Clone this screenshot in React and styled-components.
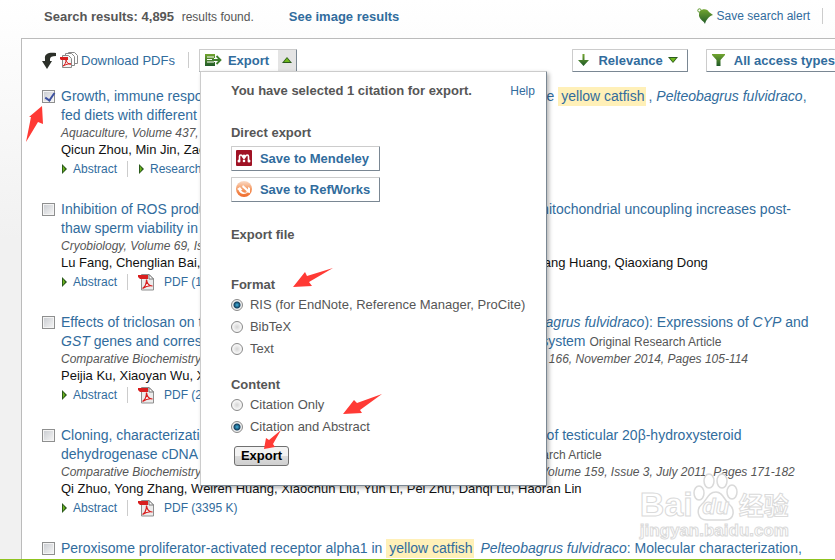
import React from "react";
import styled, { createGlobalStyle, css } from "styled-components";

const results = [
  {
    id: "growth",
    checked: true,
    title: [
      <>
        Growth, immune response and resistance to Aeromonas hydrophila, for
        juvenile <mark>yellow catfish</mark>, <i>Pelteobagrus fulvidraco</i>,
      </>,
      <>
        fed diets with different arginine levels{" "}
        <small>Original Research Article</small>
      </>,
    ],
    journal: "Aquaculture, Volume 437, 1 February 2015, Pages 84-91",
    authors: "Qicun Zhou, Min Jin, Zachary C. Elmada, Xupeng Liang, Kangsen Mai",
    highlights: true,
  },
  {
    id: "inhibition",
    title: [
      <>
        Inhibition of ROS production through mitochondria-targeted antioxidants
        and mitochondrial uncoupling increases post-
      </>,
      <>
        thaw sperm viability in <mark>yellow catfish</mark>{" "}
        <small>Original Research Article</small>
      </>,
    ],
    journal: "Cryobiology, Volume 69, Issue 3, December 2014, Pages 386-393",
    authors:
      "Lu Fang, Chenglian Bai, Yuanhong Chen, Jun Dai, Yang Xiang, Xiaoping Ji, Changjiang Huang, Qiaoxiang Dong",
    size: "1207 K",
  },
  {
    id: "triclosan",
    title: [
      <>
        Effects of triclosan on the detoxification system for the{" "}
        <mark>yellow catfish</mark> (<i>Pelteobagrus fulvidraco</i>):
        Expressions of <i>CYP</i> and
      </>,
      <>
        <i>GST</i> genes and corresponding enzyme activity in phases I, II and
        antioxidant system <small>Original Research Article</small>
      </>,
    ],
    journal:
      "Comparative Biochemistry and Physiology – Part C: Toxicology and Pharmacology, Volume 166, November 2014, Pages 105-114",
    authors:
      "Peijia Ku, Xiaoyan Wu, Xiangping Nie, Jinmiao Ou, Lan Wang, Tao Su, Yigang Li",
    size: "2148 K",
  },
  {
    id: "cloning",
    title: [
      <>
        Cloning, characterization and expression profile and tissue distribution
        pattern of testicular 20β-hydroxysteroid
      </>,
      <>
        dehydrogenase cDNA in <mark>yellow catfish</mark> (
        <i>Pelteobagrus fulvidraco</i>) <small>Original Research Article</small>
      </>,
    ],
    journal:
      "Comparative Biochemistry and Physiology – Part A: Molecular and Integrative Physiology, Volume 159, Issue 3, July 2011, Pages 171-182",
    authors:
      "Qi Zhuo, Yong Zhang, Weiren Huang, Xiaochun Liu, Yun Li, Pei Zhu, Danqi Lu, Haoran Lin",
    size: "3395 K",
  },
  {
    id: "peroxisome",
    title: [
      <>
        Peroxisome proliferator-activated receptor alpha1 in{" "}
        <mark>yellow catfish</mark> <i>Pelteobagrus fulvidraco</i>: Molecular
        characterization,
      </>,
    ],
  },
];

const Triangle = ({ dir }) => {
  const points = {
    right: "1,0 6,5 1,10",
    up: "0,8 5,2 10,8",
    down: "0,2 10,2 5,8",
  };
  const inner = {
    right: "2,2 4,5 2,8",
    up: "2,7 5,3 8,7",
    down: "2,3 8,3 5,7",
  };
  return (
    <svg width={dir === "right" ? 6 : 10} height="10" aria-hidden="true">
      <polygon points={points[dir]} fill="#2b5a1c" />
      <polygon points={inner[dir]} fill="#6fb81c" />
    </svg>
  );
};

const PdfIcon = () => (
  <svg width="17" height="17" viewBox="0 0 17 17" aria-hidden="true">
    <path d="M3.500.5h7.500l4.500 4.500v11h-12z" fill="#ececec" stroke="#8f8f8f" />
    <path d="M11 .5v4.500h4.500z" fill="#fff" stroke="#777" />
    <path d="M0 1h10v4H2L0 3z" fill="#d81e1e" />
    <path
      d="M4.500 14.500c2.500-1.500 4-5 4-9 .5 4 3 6.500 6 6.500-4-1-7 .5-10 2.500z"
      fill="#fff"
      stroke="#d81e1e"
      strokeWidth="1.200"
    />
  </svg>
);

const PdfStackIcon = () => (
  <svg width="18" height="17" viewBox="0 0 18 17" aria-hidden="true">
    <path d="M8.500.5h6l3 3v8h-9z" fill="#fff" stroke="#8a8a8a" />
    <path d="M5.500 1.500h6l3 3v9h-9z" fill="#fff" stroke="#8a8a8a" />
    <path d="M2.500 3.500h6l3 3v9h-9z" fill="#f4f4f4" stroke="#8a8a8a" />
    <path d="M0 5h8v3H1L0 7z" fill="#d81e1e" />
    <path
      d="M3 14c2-1 3-4 3-6 1 3 2 4 5 4-3-.5-5 .5-8 2z"
      fill="none"
      stroke="#d81e1e"
    />
  </svg>
);

const DownloadArrow = () => (
  <svg width="15" height="17" viewBox="0 0 15 17" aria-hidden="true">
    <path
      d="M14 1C8 0 2 1 3 7v2H0l5 8 5-8H8V7c0-2 2-3 6-3z"
      fill="#2c3029"
    />
  </svg>
);

const Gradient = ({ id }) => (
  <linearGradient id={id} x1="0" y1="0" x2="0" y2="1">
    <stop offset="0" stopColor="#72a52f" />
    <stop offset="1" stopColor="#1f5a28" />
  </linearGradient>
);

const ExportIcon = () => (
  <svg width="17" height="13" viewBox="0 0 17 13" aria-hidden="true">
    <defs>
      <Gradient id="exportFill" />
    </defs>
    <path d="M0 0h10v12H0z" fill="url(#exportFill)" />
    <path d="M2 3h7M2 5.500h7M2 8h7" stroke="#fff" />
    <path
      d="M9 6h6M11.500 1.500L16 6l-4.500 4.500"
      fill="none"
      stroke="#fff"
      strokeWidth="4"
    />
    <path
      d="M7 6h8M11.500 2L15.500 6l-4 4"
      fill="none"
      stroke="#3f7f2c"
      strokeWidth="1.800"
    />
  </svg>
);

const SortIcon = () => (
  <svg width="11" height="12" viewBox="0 0 11 12" aria-hidden="true">
    <defs>
      <Gradient id="sortFill" />
    </defs>
    <path d="M4.500 0h2v6H11l-5.500 6L0 6h4.500z" fill="url(#sortFill)" />
  </svg>
);

const FunnelIcon = () => (
  <svg width="13" height="12" viewBox="0 0 13 12" aria-hidden="true">
    <defs>
      <Gradient id="funnelFill" />
    </defs>
    <path d="M0 0h13v1L8.500 6v6h-4V6L0 1z" fill="url(#funnelFill)" />
  </svg>
);

const BellIcon = () => (
  <svg width="16" height="16" viewBox="0 0 16 16" aria-hidden="true">
    <defs>
      <Gradient id="bellFill" />
    </defs>
    <circle cx="2.500" cy="2.500" r="1.700" fill="none" stroke="#5f9a2e" />
    <path
      d="M3 3C6 0 11 1 12 4l4 3c-4 1-7 5-8 9-1-3-5-4-6-8 0-2 0-4 1-5z"
      fill="url(#bellFill)"
    />
  </svg>
);

const MendeleyIcon = () => (
  <svg width="16" height="16" viewBox="0 0 16 16" aria-hidden="true">
    <rect width="16" height="16" rx="1" fill="#a01224" />
    <path
      d="M3.500 10.500V6.500c0-2 2.500-2 3 0l1.500 2 1.500-2c.5-2 3-2 3 0v4"
      fill="none"
      stroke="#fff"
      strokeWidth="1.600"
    />
    <circle cx="8" cy="6" r="1.600" fill="#fff" />
    <circle cx="3" cy="11" r="1.500" fill="#fff" />
    <circle cx="8" cy="11" r="1.300" fill="#fff" />
    <circle cx="13" cy="11" r="1.500" fill="#fff" />
  </svg>
);

const RefWorksIcon = () => (
  <svg width="16" height="16" viewBox="0 0 16 16" aria-hidden="true">
    <defs>
      <linearGradient id="refFill" x1="0" y1="0" x2="0" y2="1">
        <stop offset="0" stopColor="#fbdcc8" />
        <stop offset="0.500" stopColor="#f59a63" />
        <stop offset="1" stopColor="#ef6a2a" />
      </linearGradient>
    </defs>
    <circle cx="8" cy="8" r="8" fill="url(#refFill)" />
    <path
      d="M1 8l3-2 2.500 3H5c1.500 2.500 4 3.500 7 2-2.500 3-8 2.500-9.500-2zM7 4l5 4.500V6l2 1v5l-5-1 2-.5L6 6z"
      fill="#fff"
    />
  </svg>
);

const Pointer = ({ x, y, w, h, points }) => (
  <PointerBox $x={x} $y={y} width={w} height={h} aria-hidden="true">
    <polygon points={points} fill="#ff3a35" />
  </PointerBox>
);

const Result = ({ id, checked, title, journal, authors, highlights, size }) => (
  <Row>
    <CheckBox
      type="checkbox"
      defaultChecked={checked}
      aria-labelledby={`title-${id}`}
    />
    <div>
      <Title id={`title-${id}`} href={`#${id}`}>
        {title.map((line, i) => (
          <span key={i}>{line}</span>
        ))}
      </Title>
      {journal && <Journal>{journal}</Journal>}
      {authors && <Authors>{authors}</Authors>}
      {authors && (
        <Links>
          <a href="#abstract">
            <Triangle dir="right" />
            Abstract
          </a>
          <Divider />
          {highlights ? (
            <a href="#highlights">
              <Triangle dir="right" />
              Research highlights
            </a>
          ) : (
            <PdfLink href="#pdf">
              <PdfIcon />
              PDF ({size})
            </PdfLink>
          )}
        </Links>
      )}
    </div>
  </Row>
);

const ExportMenu = () => (
  <Menu>
    <MenuTop>
      <Heading>You have selected 1 citation for export.</Heading>
      <a href="#help">Help</a>
    </MenuTop>
    <Heading $top={24}>Direct export</Heading>
    <SaveList>
      <Button type="button">
        <MendeleyIcon />
        Save to Mendeley
      </Button>
      <Button type="button">
        <RefWorksIcon />
        Save to RefWorks
      </Button>
    </SaveList>
    <Heading $top={24}>Export file</Heading>
    <Heading $top={32}>Format</Heading>
    <Option>
      <Radio type="radio" name="format" defaultChecked />
      RIS (for EndNote, Reference Manager, ProCite)
    </Option>
    <Option>
      <Radio type="radio" name="format" />
      BibTeX
    </Option>
    <Option>
      <Radio type="radio" name="format" />
      Text
    </Option>
    <Heading $top={16}>Content</Heading>
    <Option>
      <Radio type="radio" name="content" />
      Citation Only
    </Option>
    <Option>
      <Radio type="radio" name="content" defaultChecked />
      Citation and Abstract
    </Option>
    <Submit type="button">Export</Submit>
  </Menu>
);

const App = () => {
  return (
    <Page>
      <GlobalStyle />
      <Header>
        <p>
          <b>Search results: 4,895</b> <small>results found.</small>
        </p>
        <ImageLink href="#images">See image results</ImageLink>
        <AlertLink href="#alert">
          <BellIcon />
          Save search alert
        </AlertLink>
        <Divider />
      </Header>
      <Panel>
        <Toolbar>
          <Download href="#download">
            <DownloadArrow />
            <PdfStackIcon />
            <span>Download PDFs</span>
          </Download>
          <Divider />
          <ExportGroup>
            <SplitButton type="button" aria-expanded="true">
              <ExportIcon />
              <span>Export</span>
              <Toggle>
                <Triangle dir="up" />
              </Toggle>
            </SplitButton>
            <ExportMenu />
          </ExportGroup>
          <Filters>
            <ToolButton type="button">
              <SortIcon />
              <span>Relevance</span>
              <Triangle dir="down" />
            </ToolButton>
            <ToolButton type="button">
              <FunnelIcon />
              <span>All access types</span>
              <Triangle dir="down" />
            </ToolButton>
          </Filters>
        </Toolbar>
        {results.map((item) => (
          <Result key={item.id} {...item} />
        ))}
      </Panel>
      <Pointer x={26} y={106} w={18} h={36} points="16,0 17,18 12,16 0,36 5,11 3,11" />
      <Pointer x={293} y={267} w={41} h={21} points="0,20 12,5 14,9 40,1 16,15 19,19" />
      <Pointer x={343} y={393} w={40} h={22} points="0,21 11,7 14,10 39,1 17,17 19,20" />
      <Pointer x={264} y={430} w={18} h={20} points="0,19 2,8 5,10 17,0 9,14 11,17" />
      <Watermark>
        <div>
          <span>Bai</span>
          <Paw>
            <svg width="46" height="48" viewBox="0 0 46 48" aria-hidden="true">
              <g fill="#fff" stroke="#dadada" strokeWidth="1.500">
                <ellipse cx="6" cy="20" rx="5" ry="7" />
                <ellipse cx="16" cy="8" rx="5" ry="7" />
                <ellipse cx="29" cy="8" rx="5" ry="7" />
                <ellipse cx="39" cy="19" rx="5" ry="7" />
                <path d="M23 19c-8 0-9 8-14 12-6 5-5 16 5 16h18c10 0 10-11 4-16-5-4-6-12-13-12z" />
              </g>
            </svg>
            <em>du</em>
          </Paw>
          <Cjk>经验</Cjk>
        </div>
        <p>jingyan.baidu.com</p>
      </Watermark>
    </Page>
  );
};

const GlobalStyle = createGlobalStyle`
  * {
    box-sizing: border-box;
  }
  body {
    margin: 0;
    font-family: "Liberation Sans", Arial, sans-serif;
    font-size: 13px;
    color: #565656;
    background: #fff;
  }
  p, h2 {
    margin: 0;
  }
  a {
    color: #316c9d;
    text-decoration: none;
  }
  button {
    font-family: inherit;
    font-size: 13px;
    font-weight: bold;
    color: #316c9d;
    white-space: nowrap;
  }
  svg {
    display: block;
    flex: none;
  }
`;

const Page = styled.div`
  position: relative;
  display: flex;
  flex-direction: column;
  height: 100vh;
  overflow: hidden;
  padding-left: 21px;
  background: linear-gradient(#fff, #f1f1f1 240px);
  border-bottom: 1px solid #8fc31f;
`;

const Header = styled.header`
  display: flex;
  align-items: center;
  height: 38px;
  flex: none;
  padding: 0 12px 6px 23px;
  small {
    margin-left: 4px;
    font-size: 12px;
  }
`;

const ImageLink = styled.a`
  margin-left: 35px;
  font-weight: bold;
`;

const AlertLink = styled.a`
  display: flex;
  align-items: center;
  gap: 4px;
  margin: 0 12px 0 auto;
  font-size: 12px;
`;

const Divider = styled.span`
  width: 1px;
  height: 16px;
  background: #ccc;
`;

const Panel = styled.main`
  flex: 1;
  min-height: 0;
  overflow: hidden;
  padding-left: 20px;
  background: #fff;
  border-top: 1px solid #bbb;
  border-left: 1px solid #bbb;
`;

const Toolbar = styled.div`
  position: relative;
  z-index: 1;
  display: flex;
  align-items: center;
  height: 48px;
  padding-bottom: 6px;
`;

const Download = styled.a`
  display: flex;
  align-items: center;
  gap: 3px;
  margin-right: 13px;
`;

const ExportGroup = styled.div`
  position: relative;
  margin-left: 10px;
`;

const raised = css`
  background: #fff;
  border: 1px solid #ccc;
  border-right-color: #7a8793;
  border-bottom-color: #7a8793;
  border-radius: 1px;
`;

const Button = styled.button`
  ${raised}
  display: flex;
  align-items: center;
  gap: 8px;
  height: 25px;
  padding: 0 4px;
`;

const SplitButton = styled(Button)`
  height: 23px;
  padding: 0 0 0 5px;
  gap: 6px;
`;

const Toggle = styled.span`
  display: grid;
  place-items: center;
  align-self: stretch;
  width: 18px;
  margin-left: 3px;
  background: #e4e4e4;
`;

const ToolButton = styled(Button)`
  height: 23px;
  padding: 0 9px 0 5px;
  gap: 5px;
  svg + span {
    margin-left: 4px;
  }
`;

const Filters = styled.div`
  display: flex;
  gap: 18px;
  margin: 0 -25px 0 auto;
`;

const Menu = styled.div`
  ${raised}
  position: absolute;
  top: 22px;
  left: 1px;
  width: 347px;
  padding: 10px 11px 19px 30px;
  box-shadow: 2px 2px 4px rgba(0, 0, 0, 0.3);
`;

const MenuTop = styled.div`
  display: flex;
  justify-content: space-between;
  font-size: 12px;
  line-height: 18px;
`;

const Heading = styled.h2`
  margin-top: ${(p) => p.$top || 0}px;
  font-size: 13px;
  line-height: 18px;
`;

const SaveList = styled.div`
  display: inline-grid;
  gap: 6px;
  min-width: 149px;
  margin-top: 4px;
`;

const Option = styled.label`
  display: flex;
  align-items: center;
  gap: 7px;
  height: 22px;
`;

const Radio = styled.input`
  appearance: none;
  width: 12px;
  height: 12px;
  margin: 0;
  border: 1px solid #8a8a8a;
  border-radius: 50%;
  background: radial-gradient(#d4d4d4, #f4f4f4 4px);
  &:checked {
    background: radial-gradient(
      circle at 5px 5px,
      #3fb4e0,
      #14405f 3px,
      #eee 4px
    );
  }
`;

const Submit = styled.button`
  height: 20px;
  margin: 8px 0 0 3px;
  padding: 0 6px;
  line-height: 16px;
  color: #000;
  background: linear-gradient(#f3f3f3 50%, #dcdcdc 50%, #cfcfcf);
  border: 1px solid #707070;
  border-radius: 3px;
`;

const Row = styled.article`
  display: flex;
  gap: 6px;
  margin-bottom: 21px;
  white-space: nowrap;
`;

const CheckBox = styled.input`
  appearance: none;
  flex: none;
  width: 13px;
  height: 13px;
  margin: 3px 0 0;
  border: 1px solid #8e8f8f;
  background: linear-gradient(135deg, #c8cbd0, #f6f6f6) padding-box;
  box-shadow: inset 0 0 0 1px #f4f4f4;
  &:checked::after {
    content: "";
    display: block;
    width: 4px;
    height: 8px;
    margin: 0 0 0 4px;
    border: solid #3c50a0;
    border-width: 0 2px 2px 0;
    transform: rotate(35deg);
  }
`;

const Title = styled.a`
  display: block;
  font-size: 14px;
  line-height: 19px;
  span {
    display: block;
  }
  mark {
    margin-right: 3px;
    padding: 1px 1px 2px 3px;
    color: inherit;
    background: #fff0b8;
  }
  small {
    font-size: 12px;
    line-height: 1;
    color: #565656;
  }
`;

const Journal = styled.p`
  font-size: 12px;
  font-style: italic;
  line-height: 16px;
`;

const Authors = styled.p`
  font-size: 13px;
  line-height: 18px;
  color: #111;
`;

const Links = styled.div`
  display: flex;
  align-items: center;
  gap: 10px;
  height: 20px;
  font-size: 12px;
  a {
    display: flex;
    align-items: center;
    gap: 6px;
  }
`;

const PdfLink = styled.a`
  && {
    gap: 9px;
  }
`;

const PointerBox = styled.svg`
  position: absolute;
  z-index: 2;
  left: ${(p) => p.$x}px;
  top: ${(p) => p.$y}px;
`;

const Watermark = styled.div`
  position: absolute;
  right: 46px;
  bottom: 18px;
  color: #fff;
  font-weight: bold;
  -webkit-text-stroke: 1px #dadada;
  div {
    display: flex;
    align-items: flex-end;
    font-size: 34px;
    line-height: 34px;
  }
  p {
    font-size: 17px;
    line-height: 20px;
  }
`;

const Paw = styled.span`
  position: relative;
  em {
    position: absolute;
    inset: auto 0 2px;
    font-size: 22px;
    line-height: 24px;
    text-align: center;
  }
`;

const Cjk = styled.span`
  font-family: "Noto Sans CJK SC", sans-serif;
  font-size: 25px;
`;

export default App;
